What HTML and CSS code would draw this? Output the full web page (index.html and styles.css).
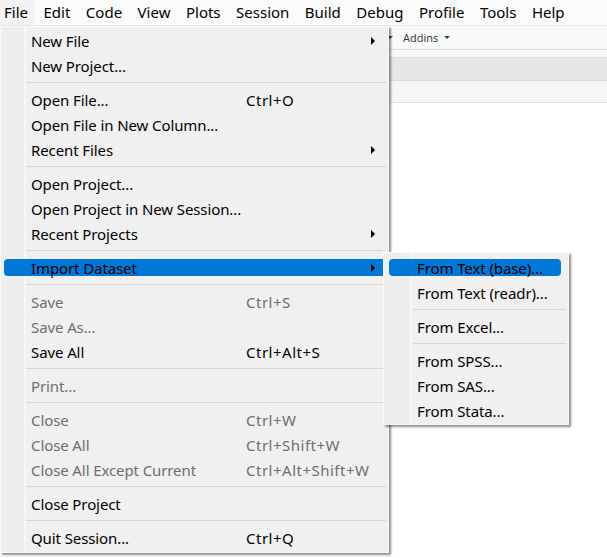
FILE: index.html
```html
<!DOCTYPE html>
<html>
<head>
<meta charset="utf-8">
<link rel="stylesheet" href="styles.css">
</head>
<body>
<div class="menubar">
  <span class="mb-item open">File</span>
  <span class="mb-item">Edit</span>
  <span class="mb-item">Code</span>
  <span class="mb-item">View</span>
  <span class="mb-item">Plots</span>
  <span class="mb-item">Session</span>
  <span class="mb-item">Build</span>
  <span class="mb-item">Debug</span>
  <span class="mb-item">Profile</span>
  <span class="mb-item">Tools</span>
  <span class="mb-item">Help</span>
</div>
<div class="toolbar">
  <span class="caret"></span>
  <span class="addins">Addins</span>
  <span class="caret"></span>
</div>
<div class="band"></div>
<div class="tabbar"></div>
<div class="subbar"></div>

<div class="menu main">
  <div class="item"><span>New File</span><span></span><svg class="arrow" width="4" height="8" viewBox="0 0 4 8"><polygon points="0,0 4,4 0,8"/></svg></div>
  <div class="item"><span>New Project...</span></div>
  <div class="sep"></div>
  <div class="item"><span>Open File...</span><span class="key">Ctrl+O</span></div>
  <div class="item"><span>Open File in New Column...</span></div>
  <div class="item"><span>Recent Files</span><span></span><svg class="arrow" width="4" height="8" viewBox="0 0 4 8"><polygon points="0,0 4,4 0,8"/></svg></div>
  <div class="sep"></div>
  <div class="item"><span>Open Project...</span></div>
  <div class="item"><span>Open Project in New Session...</span></div>
  <div class="item"><span>Recent Projects</span><span></span><svg class="arrow" width="4" height="8" viewBox="0 0 4 8"><polygon points="0,0 4,4 0,8"/></svg></div>
  <div class="sep"></div>
  <div class="item active"><span>Import Dataset</span><span></span><svg class="arrow" width="4" height="8" viewBox="0 0 4 8"><polygon points="0,0 4,4 0,8"/></svg></div>
  <div class="sep"></div>
  <div class="item disabled"><span>Save</span><span class="key">Ctrl+S</span></div>
  <div class="item disabled"><span>Save As...</span></div>
  <div class="item"><span>Save All</span><span class="key">Ctrl+Alt+S</span></div>
  <div class="sep"></div>
  <div class="item disabled"><span>Print...</span></div>
  <div class="sep"></div>
  <div class="item disabled"><span>Close</span><span class="key">Ctrl+W</span></div>
  <div class="item disabled"><span>Close All</span><span class="key">Ctrl+Shift+W</span></div>
  <div class="item disabled"><span>Close All Except Current</span><span class="key">Ctrl+Alt+Shift+W</span></div>
  <div class="sep"></div>
  <div class="item"><span>Close Project</span></div>
  <div class="sep"></div>
  <div class="item"><span>Quit Session...</span><span class="key">Ctrl+Q</span></div>
</div>

<div class="menu sub">
  <div class="item active"><span>From Text (base)...</span></div>
  <div class="item"><span>From Text (readr)...</span></div>
  <div class="sep"></div>
  <div class="item"><span>From Excel...</span></div>
  <div class="sep"></div>
  <div class="item"><span>From SPSS...</span></div>
  <div class="item"><span>From SAS...</span></div>
  <div class="item"><span>From Stata...</span></div>
</div>
</body>
</html>
```

FILE: styles.css
```css
html, body {
  margin: 0;
  padding: 0;
}
body {
  width: 607px;
  height: 558px;
  overflow: hidden;
  position: relative;
  background: #ffffff;
  font-family: "Noto Sans", "Open Sans", sans-serif;
  font-size: 15px;
  color: #000;
}
.menubar {
  height: 25px;
  display: flex;
  gap: 5.5px;
  background: #fbfbfb;
  border-bottom: 1px solid #e6e6e6;
}
.mb-item {
  display: flex;
  align-items: center;
  padding: 0 6px 0 4px;
  line-height: 25px;
}
.mb-item.open {
  background: #f2f2f2;
}
.toolbar {
  height: 23px;
  display: flex;
  align-items: center;
  padding-left: 387px;
  gap: 6px;
  background: #f8f9f9;
  border-bottom: 1px solid #dde0e2;
  font-size: 11px;
  color: #333;
}
.addins {
  margin-left: 4px;
  font-family: "Open Sans", sans-serif;
}
.caret {
  width: 0;
  height: 0;
  border-left: 3px solid transparent;
  border-right: 3px solid transparent;
  border-top: 3px solid #444;
}
.band {
  height: 7px;
  background: #f6f8f9;
}
.tabbar {
  height: 22px;
  background: #e6e7e9;
  border-top: 1px solid #dcdee0;
  border-bottom: 1px solid #d6d8da;
}
.subbar {
  height: 21px;
  background: #f4f6f7;
  border-bottom: 1px solid #dfe2e4;
}

.menu {
  position: absolute;
  background: #f0f0f0;
  border: 1px solid #fafafa;
  box-shadow: 2px 2px 2px rgba(0, 0, 0, 0.45);
}
.menu.main {
  left: 0;
  top: 26px;
  width: 387px;
  padding: 1px 0 2px;
  background: linear-gradient(to right, #eeeeee 0 23px, #f7f7f7 23px 25px, #f0f0f0 25px);
}
.menu.sub {
  left: 383px;
  top: 252px;
  width: 184px;
  padding: 2px 0 1px;
  background: linear-gradient(to right, #eeeeee 0 26px, #f7f7f7 26px 28px, #f0f0f0 28px);
}
.item {
  position: relative;
  height: 25px;
  display: grid;
  grid-template-columns: 215px 1fr auto;
  align-items: center;
  padding-left: 30px;
  white-space: nowrap;
  letter-spacing: -0.1px;
}
.item > span {
  position: relative;
}
.item .key {
  letter-spacing: 0.5px;
}
.menu.sub .item {
  padding-left: 33px;
}
.item.disabled {
  color: #6d6d6d;
}
.arrow {
  position: relative;
  margin-right: 13px;
  fill: #000;
}
.item.active::before {
  content: "";
  position: absolute;
  left: 3px;
  right: 2px;
  top: 4px;
  bottom: 4px;
  background: #0078d7;
  border-radius: 4px;
}
.menu.sub .item.active::before {
  left: 5px;
  right: 7px;
}
.sep {
  height: 1px;
  margin: 4px 2px 4px 25px;
  background: #d6d6d6;
}
.menu.sub .sep {
  margin: 4px 2px 4px 29px;
}
```
